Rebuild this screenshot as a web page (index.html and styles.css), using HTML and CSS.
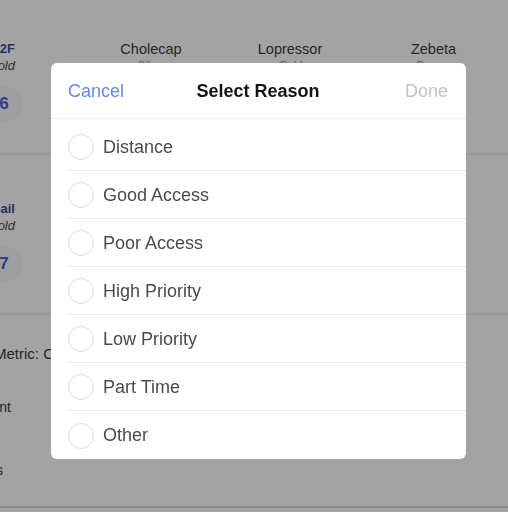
FILE: index.html
```html
<!DOCTYPE html>
<html lang="en">
<head>
<meta charset="utf-8">
<title>Select Reason</title>
<link rel="stylesheet" href="styles.css">
</head>
<body>
<main class="page">
  <section class="row">
    <div class="who">
      <div class="who-name">Unit 2F</div>
      <div class="who-tier">Gold</div>
      <div class="badge">6</div>
    </div>
    <div class="prod">
      <div class="prod-name">Cholecap</div>
      <div class="prod-tier">Silver</div>
    </div>
    <div class="prod">
      <div class="prod-name">Lopressor</div>
      <div class="prod-tier">Gold</div>
    </div>
    <div class="prod">
      <div class="prod-name">Zebeta</div>
      <div class="prod-tier">Bronze</div>
    </div>
  </section>
  <section class="row">
    <div class="who">
      <div class="who-name">Hannail</div>
      <div class="who-tier">Gold</div>
      <div class="badge">7</div>
    </div>
  </section>
  <section class="row row-last">
    <div class="metric">Metric: Calls</div>
    <div class="clip clip-nt">Segment</div>
    <div class="clip clip-s">Visits</div>
  </section>
</main>

<div class="overlay">
  <div class="sheet">
    <header class="sheet-head">
      <span class="btn-cancel">Cancel</span>
      <h1 class="sheet-title">Select Reason</h1>
      <span class="btn-done">Done</span>
    </header>
    <ul class="reasons">
      <li class="reason"><span class="radio"></span><span class="reason-label">Distance</span></li>
      <li class="reason"><span class="radio"></span><span class="reason-label">Good Access</span></li>
      <li class="reason"><span class="radio"></span><span class="reason-label">Poor Access</span></li>
      <li class="reason"><span class="radio"></span><span class="reason-label">High Priority</span></li>
      <li class="reason"><span class="radio"></span><span class="reason-label">Low Priority</span></li>
      <li class="reason"><span class="radio"></span><span class="reason-label">Part Time</span></li>
      <li class="reason"><span class="radio"></span><span class="reason-label">Other</span></li>
    </ul>
  </div>
</div>
</body>
</html>
```

FILE: styles.css
```css
* { box-sizing: border-box; }

html, body {
  margin: 0;
  padding: 0;
  width: 508px;
  height: 512px;
  overflow: hidden;
  background: #ffffff;
  font-family: "Liberation Sans", Arial, sans-serif;
}

.page {
  margin-top: -5px;
}

.row {
  display: grid;
  grid-template-columns: 81px 140px 138px 1fr;
  align-items: start;
  height: 160px;
  padding-top: 46px;
  border-bottom: 2px solid #efefef;
}

.row-last {
  display: block;
  height: 193px;
  padding-top: 31px;
  border-bottom: 2px solid #d6d6d6;
}

.who {
  width: 22px;
  display: flex;
  flex-direction: column;
  align-items: flex-end;
}

.who-name {
  padding-right: 7px;
  font-size: 13px;
  line-height: 16px;
  font-weight: 700;
  color: #3a4c98;
  white-space: nowrap;
}

.who-tier {
  padding-right: 7px;
  font-size: 13px;
  line-height: 17px;
  font-style: italic;
  color: #4c4c4c;
  white-space: nowrap;
}

.badge {
  margin-top: 12px;
  width: 36px;
  height: 36px;
  border-radius: 50%;
  background: #f7f8fc;
  display: flex;
  align-items: center;
  justify-content: center;
  font-size: 17px;
  font-weight: 700;
  color: #4660d2;
}

.prod {
  text-align: center;
}

.prod-name {
  font-size: 14.5px;
  line-height: 17px;
  color: #3a3a3a;
}

.prod-tier {
  font-size: 11px;
  line-height: 14px;
  font-style: italic;
  color: #888;
}

.metric {
  margin-left: -6px;
  font-size: 15px;
  line-height: 16px;
  color: #3a3a3a;
  white-space: nowrap;
}

.clip {
  display: flex;
  justify-content: flex-end;
  font-size: 14px;
  line-height: 16px;
  color: #3a3a3a;
  white-space: nowrap;
}

.clip-nt {
  width: 11px;
  margin-top: 37px;
}

.clip-s {
  width: 3px;
  margin-top: 47px;
}

.overlay {
  position: fixed;
  inset: 0;
  background: rgba(0, 0, 0, 0.36);
}

.sheet {
  position: absolute;
  left: 51px;
  top: 63px;
  width: 415px;
  height: 396px;
  background: #ffffff;
  border-radius: 6px;
  overflow: hidden;
}

.sheet-head {
  display: grid;
  grid-template-columns: 1fr auto 1fr;
  align-items: center;
  height: 56px;
  padding: 1px 18px 0 17px;
  border-bottom: 1px solid #efefef;
}

.btn-cancel {
  font-size: 18px;
  color: #6a89dc;
}

.sheet-title {
  margin: 0;
  font-size: 18px;
  font-weight: 700;
  color: #141414;
}

.btn-done {
  justify-self: end;
  font-size: 18px;
  color: #c3c3c3;
}

.reasons {
  list-style: none;
  margin: 0;
  padding: 4px 0 0;
}

.reason {
  display: flex;
  align-items: center;
  gap: 9px;
  height: 48px;
  padding-top: 1px;
  margin-left: 17px;
  border-bottom: 1px solid #ececec;
}

.reason:last-child {
  border-bottom: none;
}

.radio {
  width: 26px;
  height: 26px;
  border-radius: 50%;
  border: 1px solid #dcdcdc;
  flex: none;
}

.reason-label {
  font-size: 18px;
  color: #4a4a4a;
}
```
